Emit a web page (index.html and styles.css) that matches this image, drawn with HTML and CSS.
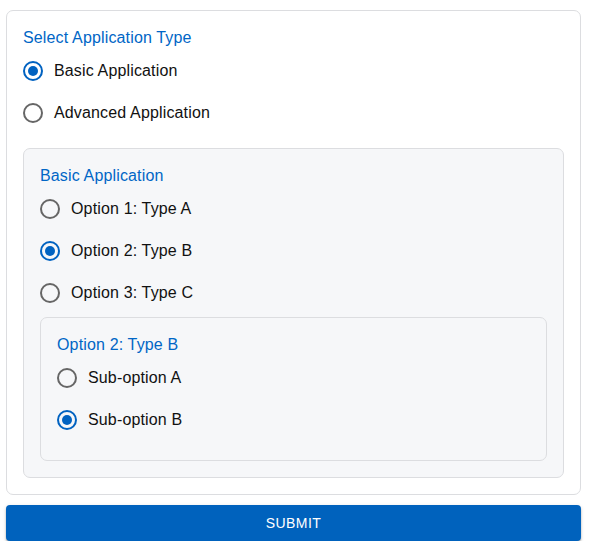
FILE: index.html
```html
<!DOCTYPE html>
<html lang="en">
<head>
<meta charset="utf-8">
<title>Application Type</title>
<link rel="stylesheet" href="styles.css">
</head>
<body>
<div class="page">
  <form class="card">
    <div class="group">
      <div class="legend">Select Application Type</div>
      <label class="option">
        <span class="radio checked"><svg viewBox="0 0 24 24" width="24" height="24"><circle cx="12" cy="12" r="9" class="ring"/><circle cx="12" cy="12" r="5" class="dot"/></svg></span>
        <span class="text">Basic Application</span>
      </label>
      <label class="option">
        <span class="radio"><svg viewBox="0 0 24 24" width="24" height="24"><circle cx="12" cy="12" r="9" class="ring"/></svg></span>
        <span class="text">Advanced Application</span>
      </label>
    </div>

    <div class="panel">
      <div class="legend">Basic Application</div>
      <label class="option">
        <span class="radio"><svg viewBox="0 0 24 24" width="24" height="24"><circle cx="12" cy="12" r="9" class="ring"/></svg></span>
        <span class="text">Option 1: Type A</span>
      </label>
      <label class="option">
        <span class="radio checked"><svg viewBox="0 0 24 24" width="24" height="24"><circle cx="12" cy="12" r="9" class="ring"/><circle cx="12" cy="12" r="5" class="dot"/></svg></span>
        <span class="text">Option 2: Type B</span>
      </label>
      <label class="option">
        <span class="radio"><svg viewBox="0 0 24 24" width="24" height="24"><circle cx="12" cy="12" r="9" class="ring"/></svg></span>
        <span class="text">Option 3: Type C</span>
      </label>

      <div class="panel nested">
        <div class="legend">Option 2: Type B</div>
        <label class="option">
          <span class="radio"><svg viewBox="0 0 24 24" width="24" height="24"><circle cx="12" cy="12" r="9" class="ring"/></svg></span>
          <span class="text">Sub-option A</span>
        </label>
        <label class="option">
          <span class="radio checked"><svg viewBox="0 0 24 24" width="24" height="24"><circle cx="12" cy="12" r="9" class="ring"/><circle cx="12" cy="12" r="5" class="dot"/></svg></span>
          <span class="text">Sub-option B</span>
        </label>
      </div>
    </div>
  </form>
  <button class="submit" type="button">Submit</button>
</div>
</body>
</html>
```

FILE: styles.css
```css
* { box-sizing: border-box; }

body {
  margin: 0;
  background: #ffffff;
  font-family: "Liberation Sans", Arial, sans-serif;
  color: #111111;
}

.page {
  padding: 10px 8px 0 6px;
  display: flex;
  flex-direction: column;
  gap: 10px;
}

.card {
  border: 1px solid #dcdde0;
  border-radius: 7px;
  padding: 16px 16px 16px 16px;
  background: #ffffff;
  display: flex;
  flex-direction: column;
}

.group {
  display: flex;
  flex-direction: column;
}

.legend {
  color: #0066c6;
  font-size: 16px;
  line-height: 21px;
  letter-spacing: 0.15px;
  margin-bottom: 2px;
}

.option {
  display: flex;
  align-items: center;
  height: 42px;
  margin-left: -11px;
  font-size: 16px;
  letter-spacing: 0.15px;
  cursor: pointer;
}

.radio {
  width: 42px;
  height: 42px;
  padding: 9px;
  display: flex;
}

.radio .ring {
  fill: none;
  stroke: #666666;
  stroke-width: 2;
}

.radio.checked .ring { stroke: #0062c1; }
.radio .dot { fill: #0062c1; }

.text {
  line-height: 24px;
}

.panel {
  margin-top: 14px;
  border: 1px solid #dcdde0;
  border-radius: 7px;
  background: #f6f7f9;
  padding: 16px 16px 16px 16px;
  display: flex;
  flex-direction: column;
}

.panel.nested {
  margin-top: 3px;
  padding-bottom: 19px;
}

.submit {
  height: 36px;
  border: none;
  border-radius: 4px;
  background: #0062bd;
  color: #ffffff;
  font-family: "Liberation Sans", Arial, sans-serif;
  font-size: 14px;
  letter-spacing: 0.4px;
  text-transform: uppercase;
  box-shadow: 0 2px 2px rgba(0,0,0,0.25), 0 1px 4px rgba(0,0,0,0.12);
  cursor: pointer;
}
```
